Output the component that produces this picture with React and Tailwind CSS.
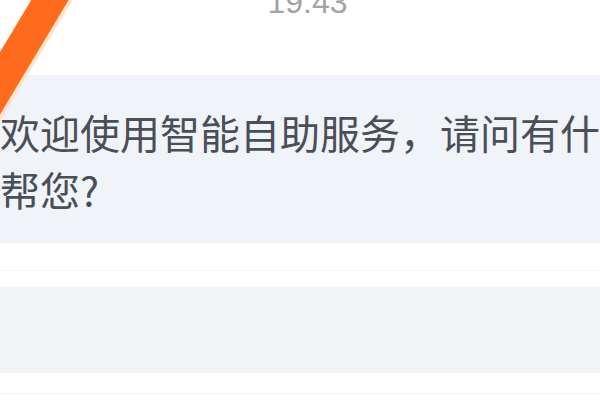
import React from "react";

const Stroke = () => (
  <svg
    className="absolute left-0 top-0 pointer-events-none"
    width="120"
    height="140"
    viewBox="0 0 120 140"
  >
    <line x1="64" y1="-20" x2="-68" y2="200" stroke="#ffe6cc" strokeWidth="36" />
    <line x1="62" y1="-20" x2="-70" y2="200" stroke="#ff6b1c" strokeWidth="32" />
  </svg>
);

const App = () => {
  return (
    <div
      className="relative w-[600px] h-[400px] overflow-hidden bg-white flex flex-col"
      style={{ fontFamily: '"Noto Sans CJK SC", "Noto Sans", sans-serif' }}
    >
      <div className="h-[75px] shrink-0 flex flex-col">
        <div
          className="mt-[-14px] pl-[15px] text-center text-[32px] leading-[32px] text-[#a3a3a3]"
          style={{ fontFamily: '"Liberation Sans", Arial, sans-serif' }}
        >
          19:43
        </div>
      </div>

      <div className="bg-[#f0f3f8] h-[168px] shrink-0 pt-[29px]">
        <p className="text-[40px] leading-[57px] text-[#4a4e57] whitespace-nowrap">
          欢迎使用智能自助服务，请问有什么可以
        </p>
        <p className="text-[40px] leading-[57px] text-[#4a4e57]">帮您?</p>
      </div>

      <div className="h-[44px] shrink-0 flex flex-col">
        <div className="h-[27px]" />
        <div className="h-px bg-[#f7f7f8]" />
      </div>

      <div className="h-[86px] shrink-0 bg-[#f1f3f7]" />

      <div className="h-[27px] shrink-0 flex flex-col">
        <div className="h-[20px]" />
        <div className="h-px bg-[#f2f2f4]" />
      </div>

      <Stroke />
    </div>
  );
};

export default App;
